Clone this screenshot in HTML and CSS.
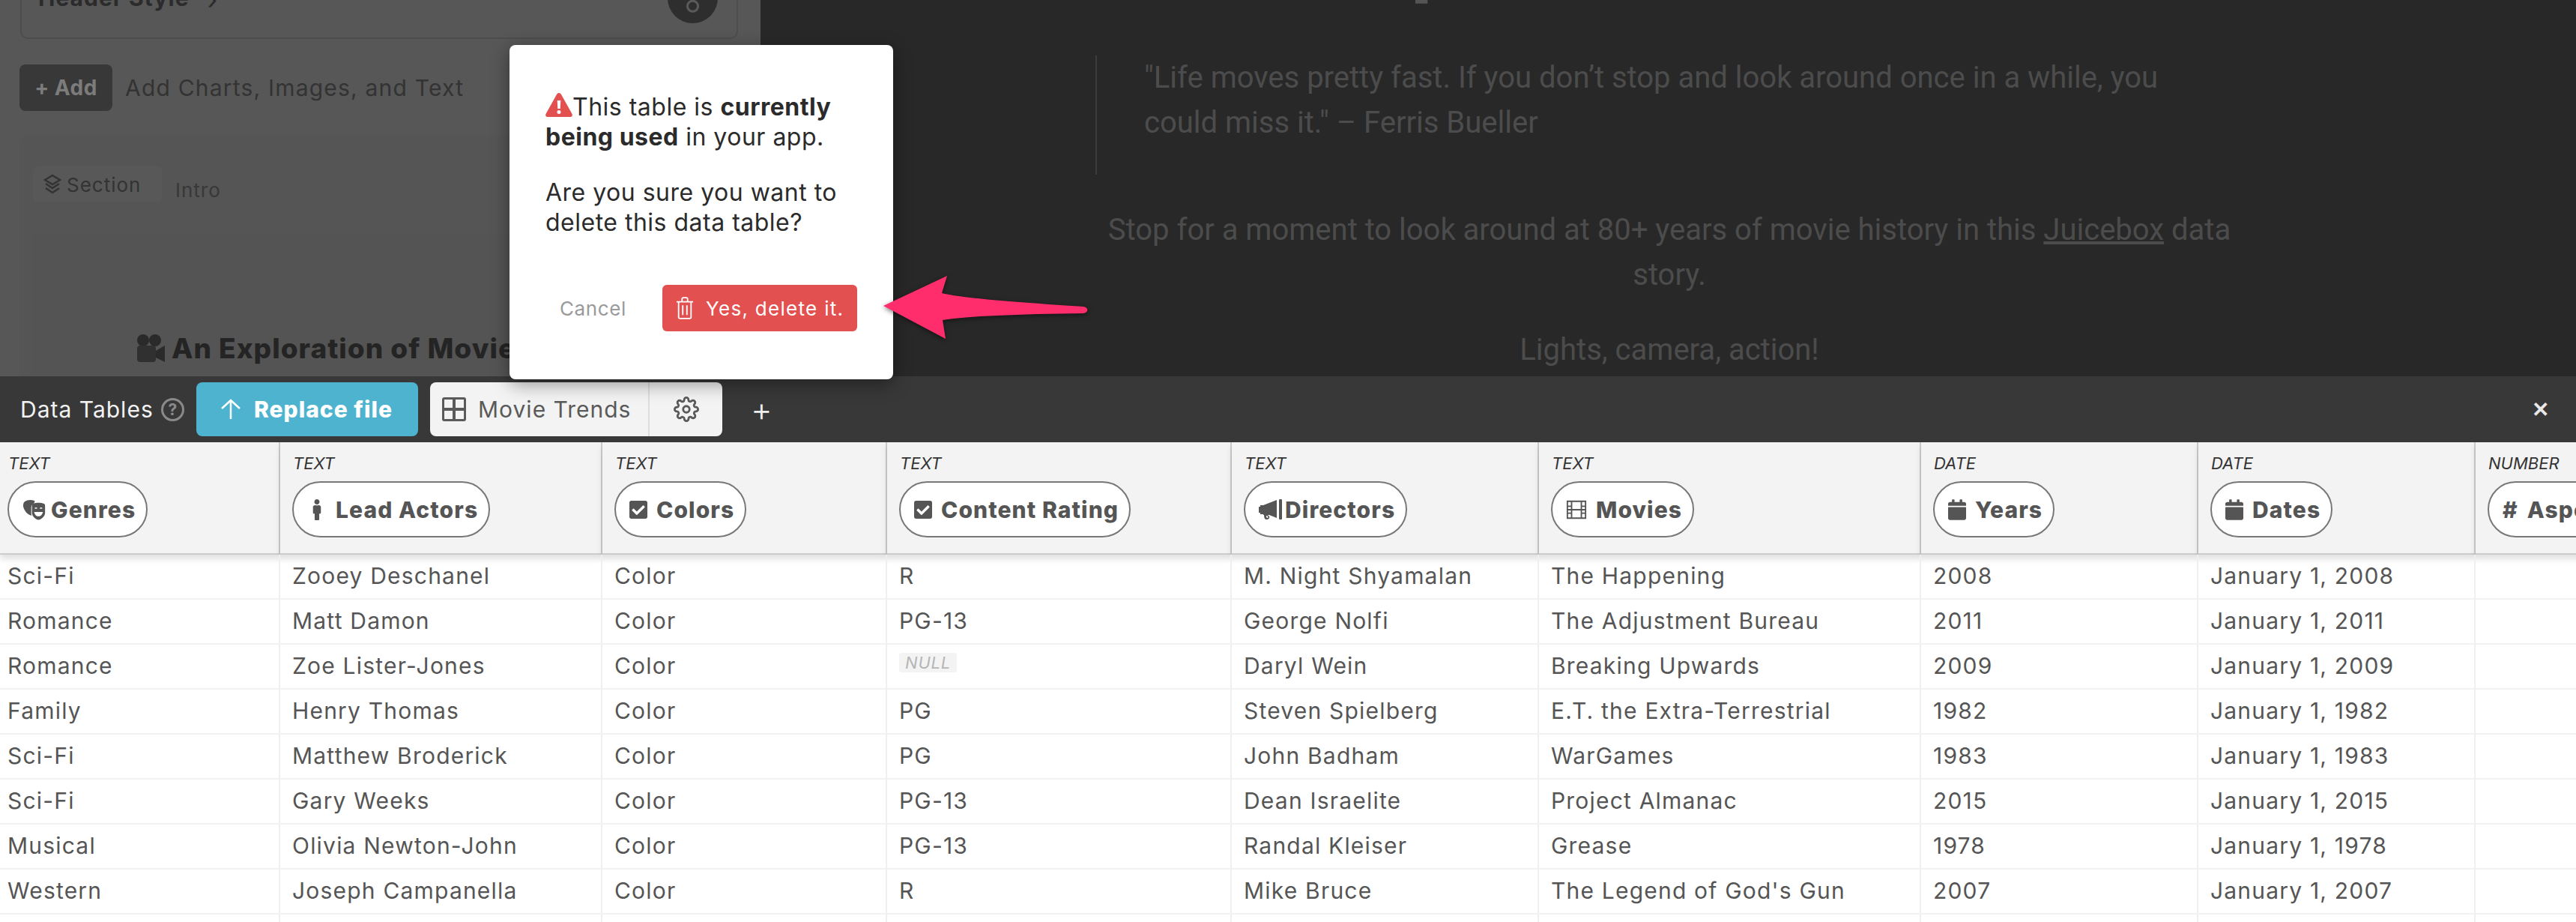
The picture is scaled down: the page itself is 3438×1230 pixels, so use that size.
FILE: index.html
```html
<!DOCTYPE html>
<html lang="en">
<head>
    <meta charset="UTF-8">
    <title>Data Tables</title>
    <link rel="stylesheet" href="styles.css">
</head>
<body>

    <!-- Shared icons -->
    <svg class="icon-defs" xmlns="http://www.w3.org/2000/svg">
        <symbol id="i-check" viewBox="0 0 448 512"><path d="M400 480H48c-26.51 0-48-21.49-48-48V80c0-26.51 21.49-48 48-48h352c26.51 0 48 21.49 48 48v352c0 26.51-21.49 48-48 48zm-204.686-98.059l184-184c6.248-6.248 6.248-16.379 0-22.627l-22.627-22.627c-6.248-6.248-16.379-6.249-22.628 0L184 302.745l-70.059-70.059c-6.248-6.248-16.379-6.248-22.628 0l-22.627 22.627c-6.248 6.248-6.248 16.379 0 22.627l104 104c6.249 6.25 16.379 6.25 22.628.001z"/></symbol>
        <symbol id="i-calendar" viewBox="0 0 448 512"><path d="M12 192h424c6.6 0 12 5.4 12 12v260c0 26.5-21.5 48-48 48H48c-26.5 0-48-21.5-48-48V204c0-6.6 5.4-12 12-12zm436-44v-36c0-26.5-21.5-48-48-48h-48V12c0-6.6-5.4-12-12-12h-40c-6.6 0-12 5.4-12 12v52H160V12c0-6.6-5.4-12-12-12h-40c-6.6 0-12 5.4-12 12v52H48C21.5 64 0 85.5 0 112v36c0 6.6 5.4 12 12 12h424c6.6 0 12-5.4 12-12z"/></symbol>
        <symbol id="i-male" viewBox="0 0 192 512"><path d="M96 0c35.346 0 64 28.654 64 64s-28.654 64-64 64-64-28.654-64-64S60.654 0 96 0m48 144h-11.36c-22.711 10.443-49.59 10.894-73.28 0H48c-26.51 0-48 21.49-48 48v136c0 13.255 10.745 24 24 24h16v136c0 13.255 10.745 24 24 24h64c13.255 0 24-10.745 24-24V352h16c13.255 0 24-10.745 24-24V192c0-26.51-21.49-48-48-48z"/></symbol>
        <symbol id="i-masks" viewBox="0 0 36 28"><path d="M3 3c4-3 9-3 14-1l-1 3c-2 1-4 3-4 6v8c0 1 .2 2 .6 3C7 21 2 15 1 9 .8 7 1.500 4 3 3z"/><path fill-rule="evenodd" d="M14 6c5-2 11-2 16 0 1 .4 1 2 1 3v9c0 5-5 9-9 10-4-1-9-5-9-10V9c0-1 0-2.600 1-3zm2.500 6c1-1.500 3-1.500 4 0l-1 .8c-.6-.6-1.400-.6-2 0zm7 0c1-1.500 3-1.500 4 0l-1 .8c-.6-.6-1.400-.6-2 0zM16 17h12c-.5 3.500-3 6-6 6s-5.500-2.500-6-6z"/></symbol>
        <symbol id="i-bullhorn" viewBox="0 0 32 28"><path d="M0 10h2V8h4l18-7v24L14 21v0H6v-1H2v-2H0z"/><path d="M7 21h5l2 2c1 2-1 4-3.500 4S7 25 7 21zm3 1c0 2 .5 3 1.500 3s1.300-1 .5-2l-1-1z"/><rect x="27" width="4" height="27" rx="1"/></symbol>
        <symbol id="i-film" viewBox="0 0 30 28"><path fill-rule="evenodd" d="M1 1h28v26H1zm2 2v5h4V3zm0 7v3h4v-3zm0 5v3h4v-3zm0 5v5h4v-5zM9 3v10h12V3zm0 12v10h12V15zM23 3v5h4V3zm0 7v3h4v-3zm0 5v3h4v-3zm0 5v5h4v-5z"/></symbol>
        <symbol id="i-gear" viewBox="0 0 24 24"><g fill="none" stroke="currentColor" stroke-width="2"><circle cx="12" cy="12" r="3"/><path d="M19.4 15a1.65 1.65 0 0 0 .33 1.82l.06.06a2 2 0 0 1 0 2.83 2 2 0 0 1-2.83 0l-.06-.06a1.65 1.65 0 0 0-1.82-.33 1.65 1.65 0 0 0-1 1.51V21a2 2 0 0 1-2 2 2 2 0 0 1-2-2v-.09A1.65 1.65 0 0 0 9 19.4a1.65 1.65 0 0 0-1.82.33l-.06.06a2 2 0 0 1-2.83 0 2 2 0 0 1 0-2.83l.06-.06a1.65 1.65 0 0 0 .33-1.82 1.65 1.65 0 0 0-1.51-1H3a2 2 0 0 1-2-2 2 2 0 0 1 2-2h.09A1.65 1.65 0 0 0 4.600 9a1.65 1.65 0 0 0-.33-1.82l-.06-.06a2 2 0 0 1 0-2.83 2 2 0 0 1 2.83 0l.06.06a1.65 1.65 0 0 0 1.82.33H9a1.65 1.65 0 0 0 1-1.51V3a2 2 0 0 1 2-2 2 2 0 0 1 2 2v.09a1.65 1.65 0 0 0 1 1.51 1.65 1.65 0 0 0 1.82-.33l.06-.06a2 2 0 0 1 2.83 0 2 2 0 0 1 0 2.83l-.06.06a1.65 1.65 0 0 0-.33 1.82V9a1.65 1.65 0 0 0 1.51 1H21a2 2 0 0 1 2 2 2 2 0 0 1-2 2h-.09a1.65 1.65 0 0 0-1.51 1z"/></g></symbol>
    </svg>

    <!-- Dimmed story editor and preview -->
    <div class="workspace">
        <div class="editor">
            <div class="header-card">
                <strong>Header Style</strong>
                <span class="chevron">&rsaquo;</span>
                <span class="round-btn"></span>
            </div>
            <div class="add-row">
                <span class="add-btn">+ Add</span>
                <span class="add-text">Add Charts, Images, and Text</span>
            </div>
            <div class="section-card">
                <div class="section-head">
                    <span class="section-tag">
                        <svg class="section-icon" viewBox="0 0 24 28" fill="none" stroke="currentColor" stroke-width="2.500"><path d="M12 2l10 6-10 6L2 8z"/><path d="M3 13l9 6 9-6"/><path d="M3 19l9 6 9-6"/></svg>
                        Section
                    </span>
                    <span class="section-name">Intro</span>
                </div>
                <div class="section-body">
                    <h2>
                        <svg class="camera" viewBox="0 0 38 38"><circle cx="9" cy="8" r="8" fill="#2a2a2a"/><circle cx="25" cy="8" r="8" fill="#2a2a2a"/><rect x="1" y="15" width="25" height="22" rx="4" fill="#303030"/><path d="M26 22l12-7v22l-12-6z" fill="#2a2a2a"/></svg>
                        An Exploration of Movie Trends
                    </h2>
                </div>
            </div>
        </div>

        <div class="preview">
            <h1 class="preview-title">An Exploration</h1>
            <blockquote>"Life moves pretty fast. If you don’t stop and look around once in a while, you could miss it." – Ferris Bueller</blockquote>
            <p class="intro">Stop for a moment to look around at 80+ years of movie history in this <u>Juicebox</u> data story.</p>
            <p class="intro">Lights, camera, action!</p>
        </div>
    </div>

    <!-- Toolbar -->
    <div class="toolbar">
        <span class="toolbar-title">Data Tables</span>
        <span class="help">?</span>
        <button class="replace-btn">
            <svg class="up-icon" viewBox="0 0 28 28" fill="none" stroke="currentColor" stroke-width="2.500"><path d="M14 27V2M2 13L14 2l12 11"/></svg>
            Replace file
        </button>
        <div class="table-tab">
            <span class="tab-name">
                <svg class="grid-icon" viewBox="0 0 32 32"><path fill-rule="evenodd" d="M3 0h26a3 3 0 0 1 3 3v26a3 3 0 0 1-3 3H3a3 3 0 0 1-3-3V3a3 3 0 0 1 3-3zm0 3v11h11V3zm15 0v11h11V3zM3 18v11h11V18zm15 0v11h11V18z"/></svg>
                Movie Trends
            </span>
            <span class="tab-gear"><svg class="gear-icon"><use href="#i-gear"/></svg></span>
        </div>
        <span class="plus">+</span>
        <span class="close">&#10005;</span>
    </div>

    <!-- Data table -->
    <div class="table-wrap">
        <table class="data-table">
            <colgroup>
                <col class="c-genres"><col class="c-actors"><col class="c-colors"><col class="c-rating"><col class="c-directors"><col class="c-movies"><col class="c-date"><col class="c-date"><col class="c-aspect">
            </colgroup>
            <thead>
                <tr>
                    <th><em>TEXT</em><span class="pill gap-s"><svg class="ic ic-masks"><use href="#i-masks"/></svg>Genres</span></th>
                    <th><em>TEXT</em><span class="pill gap-l"><svg class="ic ic-male"><use href="#i-male"/></svg>Lead Actors</span></th>
                    <th><em>TEXT</em><span class="pill"><svg class="ic ic-check"><use href="#i-check"/></svg>Colors</span></th>
                    <th><em>TEXT</em><span class="pill"><svg class="ic ic-check"><use href="#i-check"/></svg>Content Rating</span></th>
                    <th><em>TEXT</em><span class="pill gap-s"><svg class="ic ic-horn"><use href="#i-bullhorn"/></svg>Directors</span></th>
                    <th><em>TEXT</em><span class="pill"><svg class="ic ic-film"><use href="#i-film"/></svg>Movies</span></th>
                    <th><em>DATE</em><span class="pill"><svg class="ic ic-check"><use href="#i-calendar"/></svg>Years</span></th>
                    <th><em>DATE</em><span class="pill"><svg class="ic ic-check"><use href="#i-calendar"/></svg>Dates</span></th>
                    <th><em>NUMBER</em><span class="pill"><span class="hash">#</span>Aspect Ratio</span></th>
                </tr>
            </thead>
            <tbody>
                <tr><td>Sci-Fi</td><td>Zooey Deschanel</td><td>Color</td><td>R</td><td>M. Night Shyamalan</td><td>The Happening</td><td>2008</td><td>January 1, 2008</td><td></td></tr>
                <tr><td>Romance</td><td>Matt Damon</td><td>Color</td><td>PG-13</td><td>George Nolfi</td><td>The Adjustment Bureau</td><td>2011</td><td>January 1, 2011</td><td></td></tr>
                <tr><td>Romance</td><td>Zoe Lister-Jones</td><td>Color</td><td><span class="null">NULL</span></td><td>Daryl Wein</td><td>Breaking Upwards</td><td>2009</td><td>January 1, 2009</td><td></td></tr>
                <tr><td>Family</td><td>Henry Thomas</td><td>Color</td><td>PG</td><td>Steven Spielberg</td><td>E.T. the Extra-Terrestrial</td><td>1982</td><td>January 1, 1982</td><td></td></tr>
                <tr><td>Sci-Fi</td><td>Matthew Broderick</td><td>Color</td><td>PG</td><td>John Badham</td><td>WarGames</td><td>1983</td><td>January 1, 1983</td><td></td></tr>
                <tr><td>Sci-Fi</td><td>Gary Weeks</td><td>Color</td><td>PG-13</td><td>Dean Israelite</td><td>Project Almanac</td><td>2015</td><td>January 1, 2015</td><td></td></tr>
                <tr><td>Musical</td><td>Olivia Newton-John</td><td>Color</td><td>PG-13</td><td>Randal Kleiser</td><td>Grease</td><td>1978</td><td>January 1, 1978</td><td></td></tr>
                <tr><td>Western</td><td>Joseph Campanella</td><td>Color</td><td>R</td><td>Mike Bruce</td><td>The Legend of God's Gun</td><td>2007</td><td>January 1, 2007</td><td></td></tr>
                <tr><td></td><td></td><td></td><td></td><td></td><td></td><td></td><td></td><td></td></tr>
            </tbody>
        </table>
    </div>

    <!-- Delete confirmation -->
    <div class="modal">
        <div class="modal-text">
            <p>
                <svg class="warn-icon" viewBox="0 0 36 32"><path fill-rule="evenodd" d="M18 0c1.300 0 2.400.8 3 2l14.500 26c1 2-.3 4-2.500 4H3c-2.200 0-3.500-2-2.500-4L15 2c.6-1.200 1.700-2 3-2zm-2.300 10l.6 11h3.400l.6-11zM18 23a2.500 2.500 0 1 0 0 5 2.500 2.500 0 0 0 0-5z"/></svg>This table is <b>currently being used</b> in your app.
            </p>
            <p>Are you sure you want to delete this data table?</p>
        </div>
        <div class="modal-actions">
            <span class="cancel">Cancel</span>
            <button class="delete-btn">
                <svg class="trash-icon" viewBox="0 0 26 32" fill="none" stroke="currentColor" stroke-width="2"><path d="M1 7h24M9 7V3a2 2 0 0 1 2-2h4a2 2 0 0 1 2 2v4M4 7v22a2 2 0 0 0 2 2h14a2 2 0 0 0 2-2V7M10 12v14M16 12v14"/></svg>
                Yes, delete it.
            </button>
        </div>
    </div>

    <!-- Annotation arrow -->
    <svg class="arrow" viewBox="0 0 280 90" xmlns="http://www.w3.org/2000/svg">
        <path d="M3 43L88 3L81 26C110 33 180 38 270 44C277 45 277 52 270 53C180 54 110 57 82 62L86 87z" fill="#ff2d6c"/>
    </svg>

</body>
</html>
```

FILE: styles.css
```css
* {
    margin: 0;
    padding: 0;
    box-sizing: border-box;
}

body {
    position: relative;
    display: flex;
    flex-direction: column;
    width: 3438px;
    height: 1230px;
    overflow: hidden;
    font-family: Inter, "Liberation Sans", sans-serif;
    background-color: #ffffff;
}

.icon-defs {
    display: none;
}

/* Dimmed area */
.workspace {
    display: flex;
    height: 502px;
    overflow: hidden;
}

.editor {
    width: 1015px;
    padding: 0 30px 0 27px;
    background-color: #575757;
}

.header-card {
    display: flex;
    align-items: flex-end;
    height: 52px;
    padding: 0 25px 22px 22px;
    border: 2px solid #4d4d4d;
    border-top: none;
    border-radius: 0 0 10px 10px;
    color: #2b2b2b;
    font-size: 30px;
    letter-spacing: 1px;
}

.header-card strong {
    line-height: 22px;
    height: 22px;
    margin-bottom: 20px;
    overflow: visible;
}

.chevron {
    margin: 0 0 18px 24px;
    font-size: 36px;
    line-height: 22px;
}

.round-btn {
    width: 67px;
    height: 67px;
    margin: 0 0 -3px auto;
    border-radius: 50%;
    background: radial-gradient(circle at 50% 66%, #2e2e2e 5px, #5a5a5a 6px, #5a5a5a 8px, #2e2e2e 9px);
}

.add-row {
    display: flex;
    align-items: center;
    gap: 17px;
    height: 62px;
    margin-top: 34px;
    margin-left: -1px;
}

.add-btn {
    display: flex;
    align-items: center;
    justify-content: center;
    width: 124px;
    height: 62px;
    border-radius: 8px;
    background-color: #383838;
    color: #7c7c7c;
    font-size: 28px;
    font-weight: 700;
    letter-spacing: 0.5px;
}

.add-text {
    color: #333333;
    font-size: 30px;
    letter-spacing: 1.2px;
}

.section-card {
    height: 322px;
    margin-top: 32px;
    padding: 42px 0 0 17px;
    border-radius: 10px 0 0 0;
    background-color: #555555;
}

.section-head {
    display: flex;
    align-items: flex-end;
    gap: 18px;
}

.section-tag {
    display: flex;
    align-items: center;
    gap: 7px;
    width: 172px;
    height: 48px;
    padding-left: 14px;
    border-radius: 6px;
    background-color: #585858;
    color: #333333;
    font-size: 26px;
    letter-spacing: 1px;
}

.section-icon {
    width: 24px;
    height: 28px;
}

.section-name {
    margin-bottom: 1px;
    color: #383838;
    font-size: 26px;
    letter-spacing: 1px;
}

.section-body {
    height: 190px;
    margin: 42px 0 0 -2px;
    padding: 130px 0 0 140px;
    background-color: #545454;
}

.section-body h2 {
    display: flex;
    align-items: center;
    gap: 9px;
    color: #242424;
    font-size: 37px;
    font-weight: 800;
    letter-spacing: 1px;
    white-space: nowrap;
}

.camera {
    width: 38px;
    height: 38px;
}

.preview {
    flex: 1;
    padding-left: 447px;
    background-color: #282828;
    color: #4c4c4c;
    font-family: Roboto, sans-serif;
    font-size: 40px;
}

.preview-title {
    height: 74px;
    margin-left: 150px;
    margin-top: -100px;
    color: #555555;
    font-family: Inter, sans-serif;
    font-size: 96px;
    font-weight: 800;
    line-height: 100px;
    white-space: nowrap;
}

.preview-title + blockquote {
    margin-top: 100px;
}

blockquote {
    width: 1460px;
    height: 159px;
    padding-left: 63px;
    border-left: 2px solid #3c3c3c;
    line-height: 60px;
}

.intro {
    width: 1532px;
    margin-top: 40px;
    line-height: 60px;
    text-align: center;
}

blockquote + .intro {
    margin-top: 44px;
}

/* Toolbar */
.toolbar {
    display: flex;
    align-items: center;
    height: 88px;
    padding: 0 36px 0 27px;
    background-color: #383838;
}

.toolbar-title {
    width: 178px;
    color: #f2f2f2;
    font-size: 30px;
    letter-spacing: 1px;
    white-space: nowrap;
}

.help {
    display: flex;
    align-items: center;
    justify-content: center;
    width: 31px;
    height: 31px;
    margin: 0 16px 0 10px;
    border: 3px solid #8a8a8a;
    border-radius: 50%;
    color: #8a8a8a;
    font-size: 21px;
    font-weight: 700;
}

.replace-btn {
    display: flex;
    align-items: center;
    gap: 17px;
    width: 296px;
    height: 72px;
    padding-left: 32px;
    border: none;
    border-radius: 8px;
    background-color: #4eb3ce;
    color: #ffffff;
    font-family: inherit;
    font-size: 30px;
    font-weight: 800;
    letter-spacing: 1px;
}

.up-icon {
    width: 28px;
    height: 28px;
}

.table-tab {
    display: flex;
    width: 390px;
    height: 72px;
    margin-left: 16px;
    border-radius: 8px;
    background-color: #f3f3f3;
    color: #5a5a5a;
    font-size: 30px;
    letter-spacing: 1px;
}

.tab-name {
    display: flex;
    align-items: center;
    gap: 16px;
    width: 293px;
    padding-left: 16px;
    border-right: 2px solid #dddddd;
}

.grid-icon {
    width: 32px;
    height: 32px;
    fill: #5a5a5a;
}

.tab-gear {
    display: flex;
    flex: 1;
    align-items: center;
    justify-content: center;
}

.gear-icon {
    width: 34px;
    height: 34px;
    color: #5a5a5a;
}

.plus {
    margin-left: 38px;
    color: #eeeeee;
    font-size: 44px;
    font-weight: 300;
    line-height: 1;
}

.close {
    margin-left: auto;
    color: #e8e8e8;
    font-size: 28px;
    font-weight: 700;
}

/* Data table */
.table-wrap {
    flex: 1;
    overflow: hidden;
}

.data-table {
    width: 3638px;
    table-layout: fixed;
    border-collapse: separate;
    border-spacing: 0;
    color: #555555;
    font-size: 30px;
    letter-spacing: 1.2px;
}

.c-genres { width: 374px; }
.c-actors { width: 430px; }
.c-colors { width: 380px; }
.c-rating { width: 460px; }
.c-directors { width: 410px; }
.c-movies { width: 510px; }
.c-date { width: 370px; }
.c-aspect { width: 334px; }

.data-table th {
    height: 150px;
    padding: 0 16px;
    border-right: 2px solid #cccccc;
    border-bottom: 2px solid #cccccc;
    background-color: #f3f3f3;
    box-shadow: 0 6px 8px rgba(0, 0, 0, 0.12);
    text-align: left;
    vertical-align: top;
}

.data-table th:first-child,
.data-table td:first-child {
    padding-left: 10px;
}

.data-table th em {
    display: block;
    height: 52px;
    padding: 15px 0 0 1px;
    color: #333333;
    font-size: 22px;
    font-weight: 400;
    letter-spacing: 0;
    line-height: 26px;
}

.pill {
    display: inline-flex;
    align-items: center;
    gap: 12px;
    height: 75px;
    padding: 0 14px 0 18px;
    border: 2px solid #777777;
    border-radius: 38px;
    background-color: #ffffff;
    color: #555555;
    font-size: 30px;
    font-weight: 800;
    letter-spacing: 1.1px;
    white-space: nowrap;
}

.pill.gap-s {
    gap: 3px;
}

.pill.gap-l {
    gap: 19px;
    padding-left: 25px;
}

.ic {
    flex: none;
    fill: #555555;
}

.ic-masks { width: 35px; height: 28px; }
.ic-male { width: 12px; height: 28px; }
.ic-check { width: 24px; height: 28px; }
.ic-horn { width: 32px; height: 28px; }
.ic-film { width: 28px; height: 28px; }

.hash {
    font-size: 30px;
}

.data-table td {
    height: 60px;
    padding: 0 16px 3px;
    border-right: 2px solid #efefef;
    border-bottom: 2px solid #f2f2f2;
    white-space: nowrap;
}

.null {
    display: inline-block;
    position: relative;
    top: -7px;
    padding: 0 8px;
    border-radius: 4px;
    background-color: #f3f3f3;
    color: #b5b5b5;
    font-size: 22px;
    font-style: italic;
    letter-spacing: 0.8px;
    line-height: 26px;
}

/* Modal */
.modal {
    position: absolute;
    top: 60px;
    left: 680px;
    display: flex;
    flex-direction: column;
    width: 512px;
    height: 446px;
    padding: 63px 48px 0;
    border-radius: 8px;
    background-color: #ffffff;
    box-shadow: 0 6px 24px rgba(0, 0, 0, 0.4);
    color: #2b2b2b;
    font-size: 32px;
    letter-spacing: 0.5px;
}

.modal-text p {
    line-height: 40px;
    margin-bottom: 34px;
}

.warn-icon {
    width: 36px;
    height: 32px;
    fill: #e25050;
    vertical-align: -2px;
}

.modal-actions {
    display: flex;
    align-items: center;
    justify-content: space-between;
    margin-top: auto;
    margin-bottom: 64px;
    padding-left: 19px;
}

.cancel {
    color: #9a9a9a;
    font-size: 26px;
    letter-spacing: 0.6px;
}

.delete-btn {
    display: flex;
    align-items: center;
    gap: 16px;
    width: 260px;
    height: 62px;
    padding-left: 18px;
    border: none;
    border-radius: 6px;
    background-color: #e25050;
    color: #ffffff;
    font-family: inherit;
    font-size: 26px;
    letter-spacing: 1.3px;
}

.trash-icon {
    width: 24px;
    height: 30px;
}

.arrow {
    position: absolute;
    top: 365px;
    left: 1176px;
    width: 280px;
    height: 90px;
    filter: drop-shadow(0 2px 3px rgba(0, 0, 0, 0.5));
}
```
